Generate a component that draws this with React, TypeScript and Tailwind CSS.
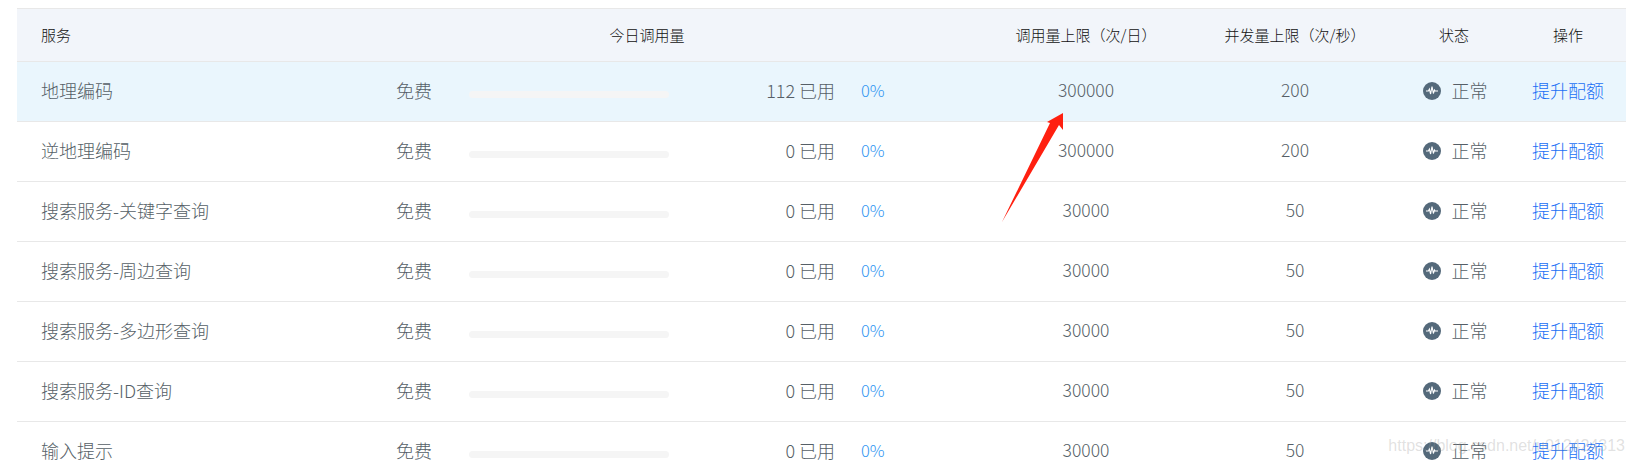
const rows = [
  { name: "地理编码", used: 112, limit: 300000, qps: 200, active: true },
  { name: "逆地理编码", used: 0, limit: 300000, qps: 200 },
  { name: "搜索服务-关键字查询", used: 0, limit: 30000, qps: 50 },
  { name: "搜索服务-周边查询", used: 0, limit: 30000, qps: 50 },
  { name: "搜索服务-多边形查询", used: 0, limit: 30000, qps: 50 },
  { name: "搜索服务-ID查询", used: 0, limit: 30000, qps: 50 },
  { name: "输入提示", used: 0, limit: 30000, qps: 50 },
];

const gridCols = "grid grid-cols-[379px_73px_200px_166px_139px_224px_194px_124px_104px_6px] items-center";

const PulseIcon = () => (
  <svg viewBox="0 0 18 18" className="w-[18px] h-[18px] shrink-0">
    <circle cx="9" cy="9" r="9" fill="#54697a" />
    <path d="M3 9h2.4l1-2 1.2 5 1.4-7.5 1.4 7 1-3.5.8 1H15" fill="none" stroke="#ffffff" strokeWidth="1.1" />
  </svg>
);

const Row = ({ name, used, limit, qps, active }: { name: string; used: number; limit: number; qps: number; active?: boolean }) => (
  <div className={`${gridCols} h-[60px] border-b border-[#e8e8e8] pb-[2px] text-[18px] text-[#565f67] ${active ? "bg-[#eaf6fd]" : "bg-white"}`}>
    <div className="pl-[24px]">{name}</div>
    <div>免费</div>
    <div className="pt-[7px]">
      <div className="h-[7px] rounded bg-[#f5f5f5]" />
    </div>
    <div className="text-right">{used} 已用</div>
    <div className="pl-[26px] text-[16.5px] text-[#2f95f2]">0%</div>
    <div className="text-center text-[17.5px]">{limit}</div>
    <div className="text-center text-[17.5px]">{qps}</div>
    <div className="flex items-center justify-center gap-[11px] pl-[2px]">
      <PulseIcon />
      <span>正常</span>
    </div>
    <div className="text-center">
      <a className="text-[#1a70f5]">提升配额</a>
    </div>
  </div>
);

export default function App() {
  return (
    <div className="relative h-[463px] w-[1634px] overflow-hidden bg-white pt-[8px] pl-[17px] pr-[8px] font-['Noto_Sans_CJK_SC',sans-serif] font-light">
      <div className={`${gridCols} h-[54px] border-y border-[#e8e8e8] bg-[#f2f5fa] text-[15px] text-[#111]`}>
        <div className="pl-[24px]">服务</div>
        <div />
        <div className="col-span-2 pr-[10px] text-center">今日调用量</div>
        <div />
        <div className="text-center">调用量上限（次/日）</div>
        <div className="text-center">并发量上限（次/秒）</div>
        <div className="text-center">状态</div>
        <div className="text-center">操作</div>
      </div>
      {rows.map((r) => (
        <Row key={r.name} {...r} />
      ))}
      {/* annotation arrow */}
      <svg className="absolute left-[990px] top-[105px]" width="90" height="125" viewBox="0 0 90 125">
        <polygon points="73,8 73,25 69,20 12,117 60,18 57,17" fill="#ff2010" />
      </svg>
      <div className="absolute right-[9px] top-[434px] font-['Liberation_Sans',sans-serif] text-[16px] font-normal text-[#9a9a9a]/30">
        https://blog.csdn.net/u012424313
      </div>
    </div>
  );
}
